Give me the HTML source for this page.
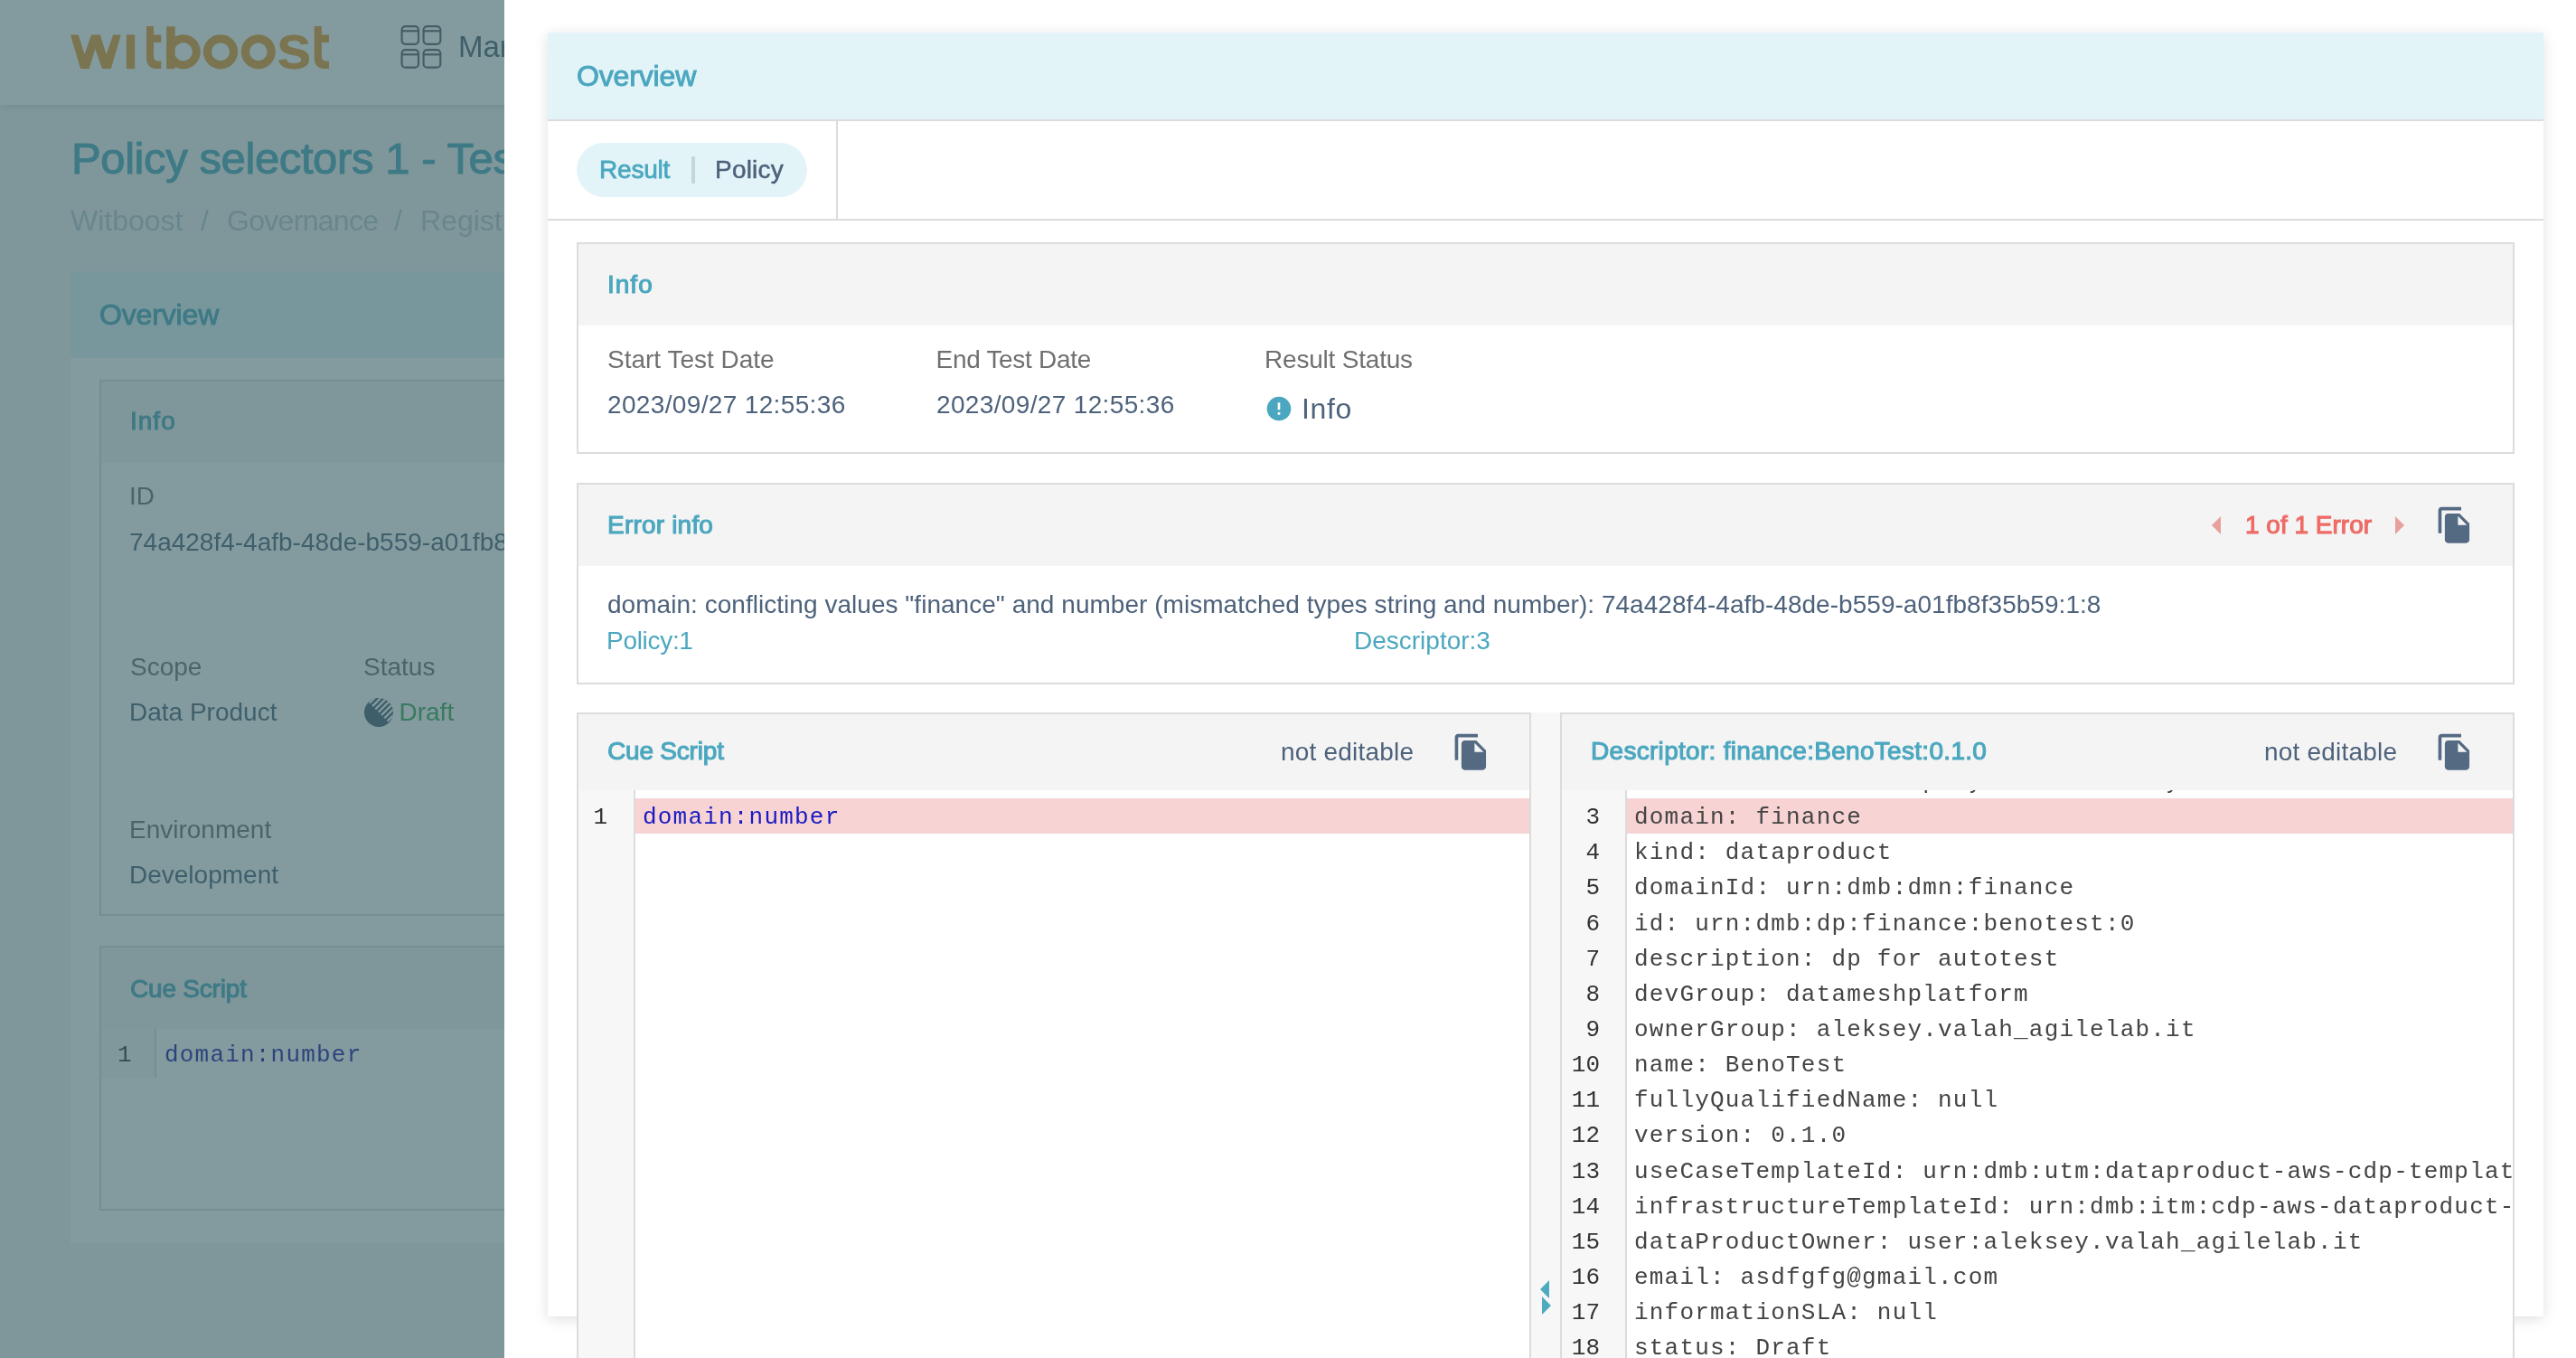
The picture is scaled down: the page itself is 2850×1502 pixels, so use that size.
<!DOCTYPE html>
<html><head><meta charset="utf-8">
<style>
*{box-sizing:border-box;margin:0;padding:0}
html,body{width:2850px;height:1502px;overflow:hidden;background:#f5f5f5}
body{position:relative;will-change:transform;font-family:"Liberation Sans",sans-serif}
.a{position:absolute;line-height:1;white-space:nowrap}
.b{font-weight:bold}
.teal{color:#4ba7bf}
.slate{color:#4d627b}
.grey{color:#707070}
.mono{font-family:"Liberation Mono",monospace}
.ln{position:absolute;font-family:"Liberation Mono",monospace;font-size:26px;line-height:39px;text-align:right;color:#333;white-space:nowrap}
.cl{position:absolute;font-family:"Liberation Mono",monospace;font-size:26px;line-height:39px;letter-spacing:1.2px;color:#444;white-space:nowrap}
</style></head><body>

<!-- ============ BACKGROUND PAGE ============ -->
<div id="page" class="a" style="left:0;top:0;width:2850px;height:1502px">
  <div class="a" style="left:0;top:0;width:2850px;height:116px;background:#fff;box-shadow:0 2px 10px rgba(0,0,0,.12)"></div>
  <!-- logo -->
  <svg class="a" style="left:0;top:0" width="400" height="100" viewBox="0 0 400 100">
    <defs><clipPath id="lc"><rect x="60" y="38.4" width="90" height="37.7"/></clipPath></defs>
    <g fill="#e89a33">
      <polygon points="77.9,38.4 86.7,38.4 93.5,60.1 101.1,38.4 110.8,38.4 117.6,60.1 125.2,38.4 133.8,38.4 122.8,76 113,76 105.4,54 98.7,76 89.1,76"/>
      <rect x="139.9" y="38.4" width="9.3" height="37.7"/>
      <path d="M162,29.1H170V38.4H178.3V47H170V62Q170,67.5 175,67.5H178.3V76.1H174Q162,76.1 162,64Z"/>
      <path d="M184.1,29.3H193.7V76.1H184.1Z"/>
      <path fill-rule="evenodd" d="M202.8,38.3a19,19 0 1,0 0.01,0ZM202.8,47.3a10,10 0 1,0 0.01,0Z"/>
      <path fill-rule="evenodd" d="M244,38.2a19.1,19.1 0 1,0 0.01,0ZM244,47.4a9.9,9.9 0 1,0 0.01,0Z"/>
      <path fill-rule="evenodd" d="M285.8,38.3a19,19 0 1,0 0.01,0ZM285.8,47.6a9.7,9.7 0 1,0 0.01,0Z"/>
      <path d="M347.7,29.1H355.9V38.4H364V47H355.9V62Q355.9,67.5 360.5,67.5H364V76.1H360Q347.7,76.1 347.7,64Z"/>
    </g>
    <text x="305.5" y="76.1" font-family="Liberation Sans" font-weight="bold" font-size="71" fill="#e89a33">s</text>
  </svg>
  <!-- grid icon -->
  <svg class="a" style="left:440px;top:25px" width="52" height="54" viewBox="440 25 52 54" fill="none" stroke="#5b5f66" stroke-width="2.2">
    <rect x="444.6" y="29.1" width="18.4" height="19.7" rx="4"/><line x1="444.6" y1="34.3" x2="463" y2="34.3"/>
    <rect x="468.6" y="29.1" width="18.7" height="19.7" rx="4"/><line x1="468.6" y1="34.3" x2="487.3" y2="34.3"/>
    <rect x="444.6" y="55.1" width="18.4" height="19.6" rx="4"/><line x1="444.6" y1="60.3" x2="463" y2="60.3"/>
    <rect x="468.6" y="55.1" width="18.7" height="19.6" rx="4"/><line x1="468.6" y1="60.3" x2="487.3" y2="60.3"/>
  </svg>
  <div class="a" style="left:507px;top:35px;font-size:33px;color:#4b5f78">Marketplace</div>
  <div class="a teal" style="left:79px;top:151px;font-size:49px;letter-spacing:-.4px;-webkit-text-stroke:1.1px #4ba7bf">Policy selectors 1 - Test</div>
  <div class="a" style="left:78px;top:228px;font-size:32px;color:#b9c8d2">Witboost</div>
  <div class="a" style="left:222px;top:228px;font-size:32px;color:#b9c8d2">/</div>
  <div class="a" style="left:251px;top:228px;font-size:32px;letter-spacing:-.7px;color:#b9c8d2">Governance</div>
  <div class="a" style="left:436px;top:228px;font-size:32px;color:#b9c8d2">/</div>
  <div class="a" style="left:465px;top:228px;font-size:32px;color:#b9c8d2">Registry</div>
  <!-- card -->
  <div class="a" style="left:78px;top:300px;width:2200px;height:1075px;background:#fff"></div>
  <div class="a" style="left:78px;top:300px;width:2200px;height:96px;background:#e3f4f9"></div>
  <div class="a teal" style="left:110px;top:332px;font-size:32px;letter-spacing:-.15px;-webkit-text-stroke:1px #4ba7bf">Overview</div>
  <div class="a" style="left:110px;top:420px;width:2000px;height:593px;border:2px solid #dcdcdc"></div>
  <div class="a" style="left:112px;top:422px;width:1996px;height:90px;background:#f4f4f4"></div>
  <div class="a teal" style="left:144px;top:452px;font-size:28px;letter-spacing:1px;-webkit-text-stroke:1.1px #4ba7bf">Info</div>
  <div class="a grey" style="left:143px;top:535px;font-size:28px">ID</div>
  <div class="a slate" style="left:143px;top:585.5px;font-size:28px">74a428f4-4afb-48de-b559-a01fb8f35b59</div>
  <div class="a grey" style="left:144px;top:723.5px;font-size:28px">Scope</div>
  <div class="a grey" style="left:402px;top:723.5px;font-size:28px">Status</div>
  <div class="a slate" style="left:143px;top:774px;font-size:28px">Data Product</div>
  <svg class="a" style="left:403px;top:772px" width="32" height="32" viewBox="0 0 32 32"><defs><clipPath id="dc"><circle cx="16" cy="16" r="16"/></clipPath></defs><g clip-path="url(#dc)"><rect width="32" height="32" fill="#4b5f78"/><g stroke="#fff" stroke-width="2.3"><line x1="2.50" y1="2.50" x2="26.50" y2="-21.50"/><line x1="5.80" y1="5.80" x2="29.80" y2="-18.20"/><line x1="9.10" y1="9.10" x2="33.10" y2="-14.90"/><line x1="12.40" y1="12.40" x2="36.40" y2="-11.60"/><line x1="15.70" y1="15.70" x2="39.70" y2="-8.30"/><line x1="19.00" y1="19.00" x2="43.00" y2="-5.00"/><line x1="22.30" y1="22.30" x2="46.30" y2="-1.70"/><line x1="25.60" y1="25.60" x2="49.60" y2="1.60"/><line x1="28.90" y1="28.90" x2="52.90" y2="4.90"/></g></g></svg>
  <div class="a" style="left:441.5px;top:774px;font-size:28px;color:#3fa55a">Draft</div>
  <div class="a grey" style="left:143px;top:904px;font-size:28px">Environment</div>
  <div class="a slate" style="left:143px;top:953.5px;font-size:28px">Development</div>
  <div class="a" style="left:110px;top:1046px;width:2000px;height:293px;border:2px solid #dcdcdc"></div>
  <div class="a" style="left:112px;top:1048px;width:1996px;height:90px;background:#f4f4f4"></div>
  <div class="a teal" style="left:144px;top:1080px;font-size:28px;letter-spacing:-.2px;-webkit-text-stroke:1.1px #4ba7bf">Cue Script</div>
  <div class="a" style="left:112px;top:1138px;width:61px;height:54px;background:#f7f7f7;border-right:2px solid #dcdcdc"></div>
  <div class="a mono" style="left:130px;top:1154px;font-size:26px;color:#333">1</div>
  <div class="a mono" style="left:182px;top:1154px;font-size:26px;letter-spacing:1.2px;color:#1a1aa6">domain:number</div>
</div>
<!-- overlay -->
<div class="a" style="left:0;top:0;width:2850px;height:1502px;background:rgba(55,93,98,.62)"></div>

<!-- ============ DRAWER ============ -->
<div id="drawer" class="a" style="left:558px;top:0;width:2292px;height:1502px;background:#fff"></div>
<!-- card -->
<div class="a" style="left:606px;top:36px;width:2208px;height:1420px;background:#fff;box-shadow:0 3px 14px rgba(0,0,0,.13)"></div>
<div class="a" style="left:606px;top:36px;width:2208px;height:96px;background:#e3f4f9;border-bottom:2px solid #dcdcdc;height:98px"></div>
<div class="a teal" style="left:638px;top:68px;font-size:32px;letter-spacing:-.15px;-webkit-text-stroke:1px #4ba7bf">Overview</div>
<div class="a" style="left:606px;top:242px;width:2208px;height:2px;background:#dcdcdc"></div>
<div class="a" style="left:925px;top:134px;width:2px;height:108px;background:#dcdcdc"></div>
<div class="a" style="left:638px;top:158px;width:255px;height:60px;border-radius:30px;background:#e3f4f9"></div>
<div class="a teal" style="left:663px;top:174px;font-size:28px;letter-spacing:-.2px;-webkit-text-stroke:.8px #4ba7bf">Result</div>
<div class="a" style="left:765px;top:173px;width:4px;height:30px;background:#c7d4d9"></div>
<div class="a slate" style="left:791px;top:174px;font-size:28px;letter-spacing:.2px;-webkit-text-stroke:.5px #4b5f78">Policy</div>

<!-- Info box -->
<div class="a" style="left:638px;top:268px;width:2144px;height:234px;border:2px solid #dcdcdc"></div>
<div class="a" style="left:640px;top:270px;width:2140px;height:90px;background:#f4f4f4"></div>
<div class="a teal" style="left:672px;top:301px;font-size:28px;letter-spacing:1px;-webkit-text-stroke:1.1px #4ba7bf">Info</div>
<div class="a grey" style="left:672px;top:384px;font-size:28px">Start Test Date</div>
<div class="a grey" style="left:1035.5px;top:384px;font-size:28px;letter-spacing:-.3px">End Test Date</div>
<div class="a grey" style="left:1399px;top:384px;font-size:28px;letter-spacing:-.2px">Result Status</div>
<div class="a slate" style="left:672px;top:434px;font-size:28px;letter-spacing:.35px">2023/09/27 12:55:36</div>
<div class="a slate" style="left:1036px;top:434px;font-size:28px;letter-spacing:.35px">2023/09/27 12:55:36</div>
<svg class="a" style="left:1398.7px;top:436px" width="32" height="32" viewBox="0 0 24 24"><path fill="#4ba7bf" d="M12 2C6.48 2 2 6.48 2 12s4.48 10 10 10 10-4.48 10-10S17.52 2 12 2zm1 15h-2v-2h2v2zm0-4h-2V7h2v6z"/></svg>
<div class="a slate" style="left:1440px;top:436px;font-size:32px;letter-spacing:.6px">Info</div>

<!-- Error box -->
<div class="a" style="left:638px;top:534px;width:2144px;height:223px;border:2px solid #dcdcdc"></div>
<div class="a" style="left:640px;top:536px;width:2140px;height:90px;background:#f4f4f4"></div>
<div class="a teal" style="left:672px;top:567px;font-size:28px;letter-spacing:.2px;-webkit-text-stroke:1.1px #4ba7bf">Error info</div>
<svg class="a" style="left:2429px;top:557px" width="48" height="48" viewBox="0 0 24 24"><path fill="#e8a09d" d="M14 7l-5 5 5 5V7z"/></svg>
<div class="a" style="left:2484px;top:567px;font-size:28px;letter-spacing:0;color:#ee6b66;-webkit-text-stroke:1.1px #ee6b66">1 of 1 Error</div>
<svg class="a" style="left:2630px;top:557px" width="48" height="48" viewBox="0 0 24 24"><path fill="#e8a09d" d="M10 17l5-5-5-5v10z"/></svg>
<svg class="a" style="left:2694.2px;top:559.2px" width="43.5" height="43.5" viewBox="0 0 24 24"><path fill="#546a82" d="M16 1H4c-1.1 0-2 .9-2 2v14h2V3h12V1zm-1 4 6 6v10c0 1.1-.9 2-2 2H7.99C6.89 23 6 22.1 6 21l.01-14c0-1.1.89-2 1.99-2h7zm-1 7h5.5L14 6.5V12z"/></svg>
<div class="a slate" style="left:672px;top:655px;font-size:28px;letter-spacing:.035px">domain: conflicting values "finance" and number (mismatched types string and number): 74a428f4-4afb-48de-b559-a01fb8f35b59:1:8</div>
<div class="a teal" style="left:671px;top:695px;font-size:28px;letter-spacing:-.3px">Policy:1</div>
<div class="a teal" style="left:1498px;top:695px;font-size:28px">Descriptor:3</div>

<!-- middle gutter -->
<div class="a" style="left:1694px;top:788px;width:32px;height:714px;background:#f7f7f7"></div>
<svg class="a" style="left:1694px;top:1400px" width="32" height="60" viewBox="1694 1400 32 60"><path fill="#4eaabf" d="M1704,1426 L1714,1416 L1714,1436Z M1706,1434 L1716,1444 L1706,1454Z"/></svg>

<!-- Left editor -->
<div class="a" style="left:638px;top:788px;width:1056px;height:800px;border:2px solid #dcdcdc;background:#fff"></div>
<div class="a" style="left:640px;top:790px;width:1052px;height:84px;background:#f4f4f4"></div>
<div class="a teal" style="left:672px;top:817px;font-size:28px;letter-spacing:-.2px;-webkit-text-stroke:1.1px #4ba7bf">Cue Script</div>
<div class="a slate" style="left:1417px;top:818px;font-size:28px;letter-spacing:.2px">not editable</div>
<svg class="a" style="left:1606.4px;top:810.1px" width="43.5" height="43.5" viewBox="0 0 24 24"><path fill="#546a82" d="M16 1H4c-1.1 0-2 .9-2 2v14h2V3h12V1zm-1 4 6 6v10c0 1.1-.9 2-2 2H7.99C6.89 23 6 22.1 6 21l.01-14c0-1.1.89-2 1.99-2h7zm-1 7h5.5L14 6.5V12z"/></svg>
<div class="a" style="left:640px;top:874px;width:63px;height:700px;background:#f7f7f7;border-right:2px solid #dcdcdc"></div>
<div class="a" style="left:703px;top:883px;width:989px;height:39px;background:#f7d3d3"></div>
<div class="ln" style="top:885px;left:640px;width:32px">1</div>
<div class="cl" style="top:885px;left:711px;color:#1a1ac2">domain:number</div>

<!-- Right editor -->
<div class="a" style="left:1726px;top:788px;width:1056px;height:800px;border:2px solid #dcdcdc;background:#fff;overflow:hidden">
 <div style="position:absolute;left:-1728px;top:-790px;width:2850px;height:1600px">
  <div class="a" style="left:1728px;top:874px;width:72px;height:800px;background:#f7f7f7;border-right:2px solid #dcdcdc"></div>
  <div class="a" style="left:1800px;top:883px;width:1000px;height:39px;background:#f7d3d3"></div>
  <div style="position:absolute;left:0;top:0;width:2850px;height:1600px;clip-path:inset(874px 0 0 0)">
   <div style="position:absolute;left:1728px;top:0;width:42px"><div class="ln" style="left:0;width:42px;top:845.95px">2</div><div class="ln" style="left:0;width:42px;top:885.10px">3</div><div class="ln" style="left:0;width:42px;top:924.25px">4</div><div class="ln" style="left:0;width:42px;top:963.40px">5</div><div class="ln" style="left:0;width:42px;top:1002.55px">6</div><div class="ln" style="left:0;width:42px;top:1041.70px">7</div><div class="ln" style="left:0;width:42px;top:1080.85px">8</div><div class="ln" style="left:0;width:42px;top:1120.00px">9</div><div class="ln" style="left:0;width:42px;top:1159.15px">10</div><div class="ln" style="left:0;width:42px;top:1198.30px">11</div><div class="ln" style="left:0;width:42px;top:1237.45px">12</div><div class="ln" style="left:0;width:42px;top:1276.60px">13</div><div class="ln" style="left:0;width:42px;top:1315.75px">14</div><div class="ln" style="left:0;width:42px;top:1354.90px">15</div><div class="ln" style="left:0;width:42px;top:1394.05px">16</div><div class="ln" style="left:0;width:42px;top:1433.20px">17</div><div class="ln" style="left:0;width:42px;top:1472.35px">18</div><div class="ln" style="left:0;width:42px;top:1511.50px">19</div></div>
   <div style="position:absolute;left:0;top:0"><div class="cl" style="left:1808px;top:845.95px">dataProductOwnerDisplayName: Aleksey Valah</div><div class="cl" style="left:1808px;top:885.10px">domain: finance</div><div class="cl" style="left:1808px;top:924.25px">kind: dataproduct</div><div class="cl" style="left:1808px;top:963.40px">domainId: urn:dmb:dmn:finance</div><div class="cl" style="left:1808px;top:1002.55px">id: urn:dmb:dp:finance:benotest:0</div><div class="cl" style="left:1808px;top:1041.70px">description: dp for autotest</div><div class="cl" style="left:1808px;top:1080.85px">devGroup: datameshplatform</div><div class="cl" style="left:1808px;top:1120.00px">ownerGroup: aleksey.valah_agilelab.it</div><div class="cl" style="left:1808px;top:1159.15px">name: BenoTest</div><div class="cl" style="left:1808px;top:1198.30px">fullyQualifiedName: null</div><div class="cl" style="left:1808px;top:1237.45px">version: 0.1.0</div><div class="cl" style="left:1808px;top:1276.60px">useCaseTemplateId: urn:dmb:utm:dataproduct-aws-cdp-template:0.0.0</div><div class="cl" style="left:1808px;top:1315.75px">infrastructureTemplateId: urn:dmb:itm:cdp-aws-dataproduct-provisioner:1</div><div class="cl" style="left:1808px;top:1354.90px">dataProductOwner: user:aleksey.valah_agilelab.it</div><div class="cl" style="left:1808px;top:1394.05px">email: asdfgfg@gmail.com</div><div class="cl" style="left:1808px;top:1433.20px">informationSLA: null</div><div class="cl" style="left:1808px;top:1472.35px">status: Draft</div><div class="cl" style="left:1808px;top:1511.50px">maturity: null</div></div>
  </div>
  <div class="a" style="left:1728px;top:790px;width:1052px;height:84px;background:#f4f4f4"></div>
  <div class="a teal" style="left:1760px;top:817px;font-size:28px;letter-spacing:.3px;-webkit-text-stroke:1.1px #4ba7bf">Descriptor: finance:BenoTest:0.1.0</div>
  <div class="a slate" style="left:2505px;top:818px;font-size:28px;letter-spacing:.2px">not editable</div>
  <svg class="a" style="left:2694.2px;top:810.3px" width="43.5" height="43.5" viewBox="0 0 24 24"><path fill="#546a82" d="M16 1H4c-1.1 0-2 .9-2 2v14h2V3h12V1zm-1 4 6 6v10c0 1.1-.9 2-2 2H7.99C6.89 23 6 22.1 6 21l.01-14c0-1.1.89-2 1.99-2h7zm-1 7h5.5L14 6.5V12z"/></svg>
 </div>
</div>
</body></html>
